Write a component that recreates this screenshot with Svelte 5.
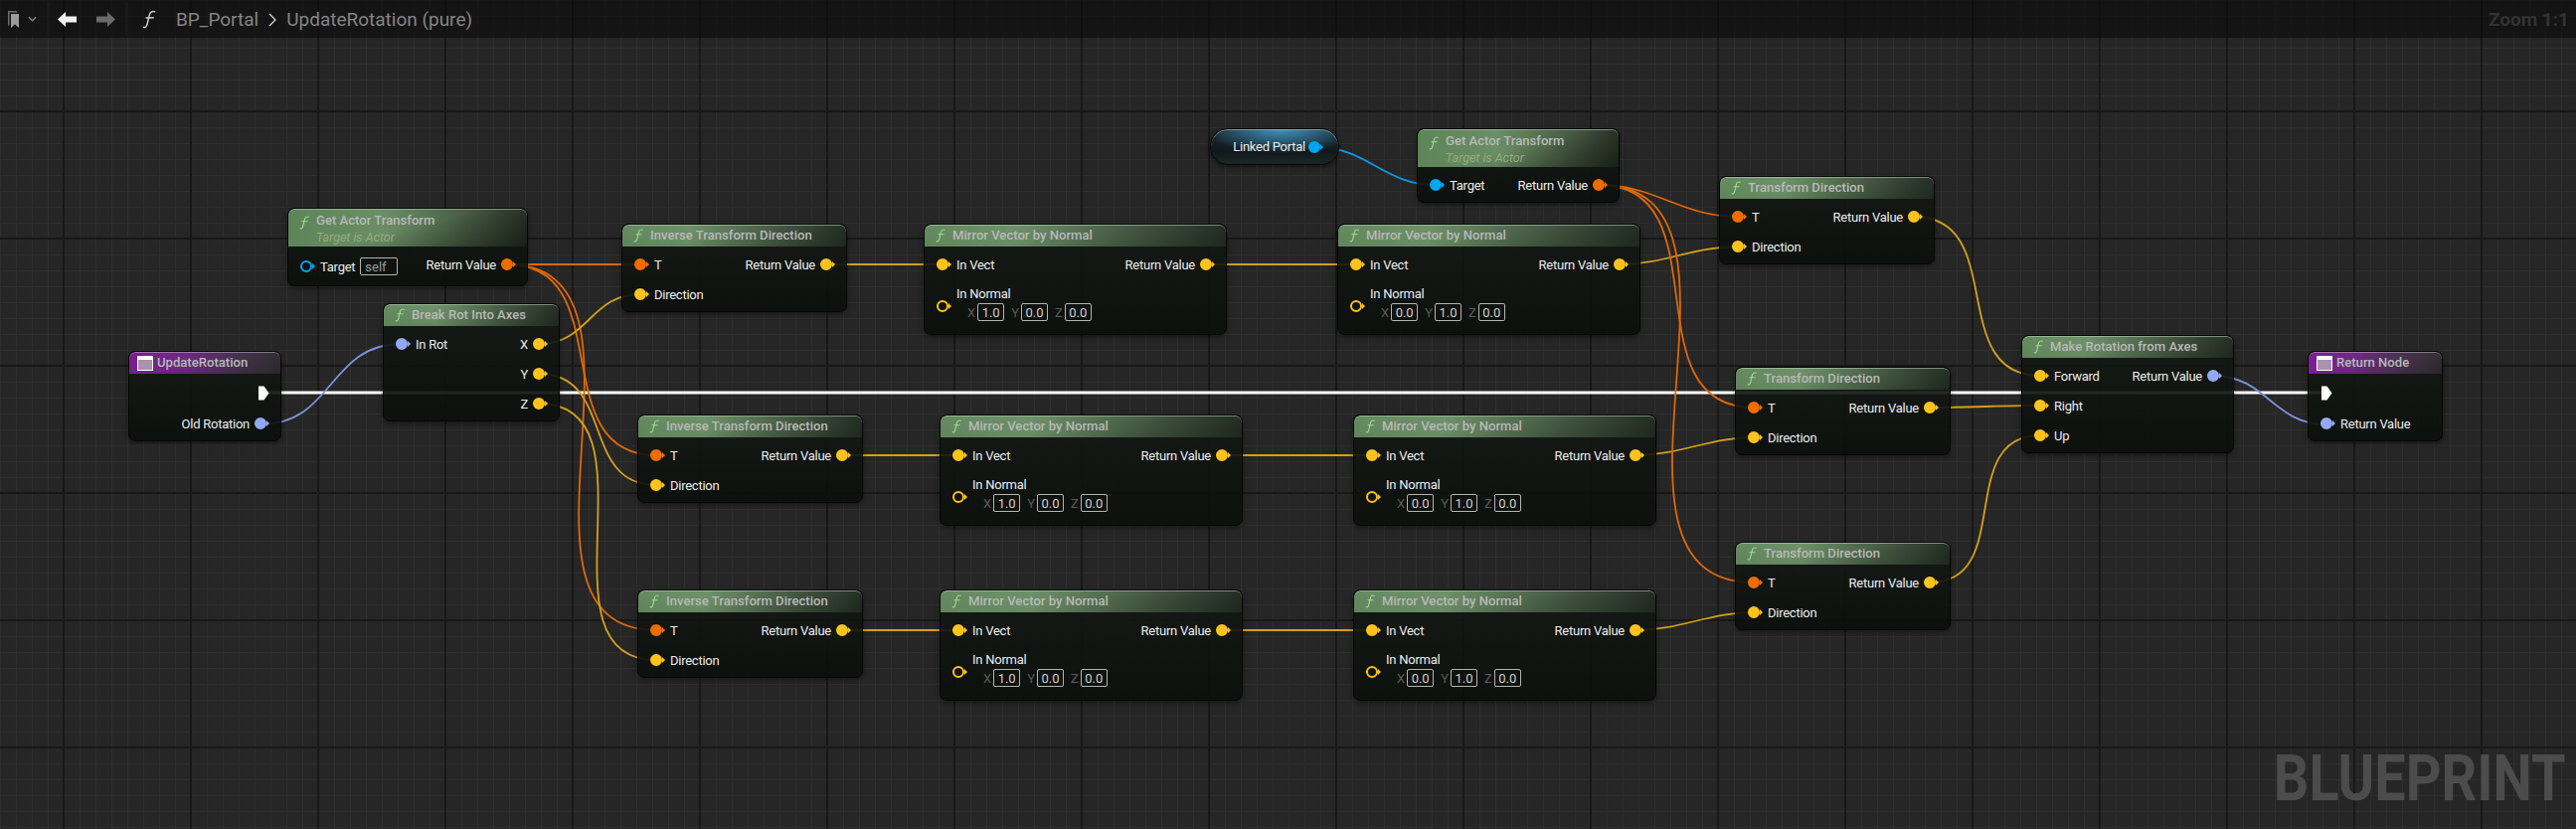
<script>
    const vec = (x, y, z) => [x, y, z];

    const inverse = (id, x, y) => ({
        id, x, y, w: 227, title: "Inverse Transform Direction",
        inputs: [{ label: "T", color: "orange" }, { label: "Direction", color: "yellow" }],
        outputs: [{ label: "Return Value", color: "yellow" }],
    });
    const mirror = (id, x, y, normal) => ({
        id, x, y, w: 305, title: "Mirror Vector by Normal",
        inputs: [{ label: "In Vect", color: "yellow" }, { label: "In Normal", color: "yellow", hollow: true, normal }],
        outputs: [{ label: "Return Value", color: "yellow" }],
    });
    const transform = (id, x, y) => ({
        id, x, y, w: 217, title: "Transform Direction",
        inputs: [{ label: "T", color: "orange" }, { label: "Direction", color: "yellow" }],
        outputs: [{ label: "Return Value", color: "yellow" }],
    });

    const nodes = [
        { id: "actorA", x: 289, y: 209, w: 242, title: "Get Actor Transform", sub: "Target is Actor",
          inputs: [{ label: "Target", color: "cyan", hollow: true, self: true }],
          outputs: [{ label: "Return Value", color: "orange" }] },
        { id: "break", x: 385, y: 305, w: 178, title: "Break Rot Into Axes",
          inputs: [{ label: "In Rot", color: "blue" }],
          outputs: [{ label: "X", color: "yellow" }, { label: "Y", color: "yellow" }, { label: "Z", color: "yellow" }] },
        { id: "entry", x: 129, y: 353, w: 154, title: "UpdateRotation", purple: true,
          inputs: [],
          outputs: [{ exec: true }, { label: "Old Rotation", color: "blue" }] },
        inverse("inv1", 625, 225),
        inverse("inv2", 641, 417),
        inverse("inv3", 641, 593),
        mirror("mir1", 929, 225, vec("1.0", "0.0", "0.0")),
        mirror("mir2", 945, 417, vec("1.0", "0.0", "0.0")),
        mirror("mir3", 945, 593, vec("1.0", "0.0", "0.0")),
        mirror("mir4", 1345, 225, vec("0.0", "1.0", "0.0")),
        mirror("mir5", 1361, 417, vec("0.0", "1.0", "0.0")),
        mirror("mir6", 1361, 593, vec("0.0", "1.0", "0.0")),
        { id: "actorB", x: 1425, y: 129, w: 204, title: "Get Actor Transform", sub: "Target is Actor",
          inputs: [{ label: "Target", color: "cyan" }],
          outputs: [{ label: "Return Value", color: "orange" }] },
        transform("tr1", 1729, 177),
        transform("tr2", 1745, 369),
        transform("tr3", 1745, 545),
        { id: "make", x: 2033, y: 337, w: 214, title: "Make Rotation from Axes",
          inputs: [{ label: "Forward", color: "yellow" }, { label: "Right", color: "yellow" }, { label: "Up", color: "yellow" }],
          outputs: [{ label: "Return Value", color: "blue" }] },
        { id: "ret", x: 2321, y: 353, w: 136, title: "Return Node", purple: true,
          inputs: [{ exec: true }, { label: "Return Value", color: "blue" }],
          outputs: [] },
    ];

    const byId = Object.fromEntries(nodes.map((n) => [n.id, n]));

    // pin centre from the node box, rows are 30 high under the header
    function pinPos(id, side, index) {
        const n = byId[id];
        const head = n.sub ? 39 : 23;
        let y = n.y + head + 18 + 30 * index;
        if (n.purple && index === 0) y += 1;
        if (n.purple && index === 1) y += 3;
        return { x: side === "out" ? n.x + n.w - 21 : n.x + 19, y };
    }

    // same tangent rule as the editor: horizontal + vertical delta, a third on each handle
    function wirePath(a, b) {
        const c = (Math.abs(b.x - a.x) + Math.abs(b.y - a.y)) / 3;
        return `M${a.x} ${a.y}C${a.x + c} ${a.y} ${b.x - c} ${b.y} ${b.x} ${b.y}`;
    }

    const links = [
        ["entry", 1, "break", 0, "blue"],
        ["actorA", 0, "inv1", 0, "orange"],
        ["actorA", 0, "inv2", 0, "orange"],
        ["actorA", 0, "inv3", 0, "orange"],
        ["break", 0, "inv1", 1, "yellow"],
        ["break", 1, "inv2", 1, "yellow"],
        ["break", 2, "inv3", 1, "yellow"],
        ["inv1", 0, "mir1", 0, "yellow"],
        ["inv2", 0, "mir2", 0, "yellow"],
        ["inv3", 0, "mir3", 0, "yellow"],
        ["mir1", 0, "mir4", 0, "yellow"],
        ["mir2", 0, "mir5", 0, "yellow"],
        ["mir3", 0, "mir6", 0, "yellow"],
        ["mir4", 0, "tr1", 1, "yellow"],
        ["mir5", 0, "tr2", 1, "yellow"],
        ["mir6", 0, "tr3", 1, "yellow"],
        ["actorB", 0, "tr1", 0, "orange"],
        ["actorB", 0, "tr2", 0, "orange"],
        ["actorB", 0, "tr3", 0, "orange"],
        ["tr1", 0, "make", 0, "yellow"],
        ["tr2", 0, "make", 1, "yellow"],
        ["tr3", 0, "make", 2, "yellow"],
        ["make", 0, "ret", 1, "blue"],
    ];

    const wires = links.map(([from, fi, to, ti, color]) => ({
        color,
        d: wirePath(pinPos(from, "out", fi), pinPos(to, "in", ti)),
    }));
    const portalWire = wirePath({ x: 1323, y: 148 }, pinPos("actorB", "in", 0));
    const execWire = "M264 395H2340";
</script>

{#snippet fnIcon(cls)}
    <svg class={cls} viewBox="0 0 12 15" fill="none" stroke="currentColor" stroke-width="1.2">
        <path d="M0.8 13.6C2.6 14.6 3.6 13.4 4.2 10.8L5.8 4C6.4 1.4 8 0.4 10.6 1.4" />
        <path d="M2.8 6.2H9.4" />
    </svg>
{/snippet}

{#snippet pin(p)}
    {#if p.exec}
        <svg class="exec" viewBox="0 0 12 15"><path d="M1 0.5H6.5L11.5 7.5L6.5 14.5H1Z" fill="#fff" /></svg>
    {:else}
        <span class="pin {p.color}" class:hollow={p.hollow}></span>
    {/if}
{/snippet}

{#snippet inputRow(p)}
    <div class="row" class:execrow={p.exec} class:tall={p.self} class:normal={p.normal}>
        {@render pin(p)}
        {#if p.normal}
            <div class="normal-col">
                <span class="label">{p.label}</span>
                <div class="vec">
                    {#each ["X", "Y", "Z"] as axis, i}
                        <span class="axis">{axis}</span>
                        <span class="val">{p.normal[i]}</span>
                    {/each}
                </div>
            </div>
        {:else if p.label}
            <span class="label">{p.label}</span>
            {#if p.self}<span class="val self">self</span>{/if}
        {/if}
    </div>
{/snippet}

<main class="graph">
    <svg class="wires" width="2591" height="834" fill="none">
        <path d={execWire} stroke="#fff" stroke-width="3" />
        {#each wires as w}
            <path d={w.d} class="wire {w.color}" />
        {/each}
        <path d={portalWire} class="wire cyan" />
    </svg>

    <div class="portal">
        <span class="label">Linked Portal</span>
        <span class="pin cyan"></span>
    </div>

    {#each nodes as n (n.id)}
        <section class="node" style="left:{n.x}px;top:{n.y}px;width:{n.w}px">
            <header class="head" class:purple={n.purple} class:tallhead={n.sub}>
                {#if n.purple}
                    <span class="fn-box"></span>
                {:else}
                    {@render fnIcon("fn")}
                {/if}
                <div class="titles">
                    <span class="title">{n.title}</span>
                    {#if n.sub}<span class="sub">{n.sub}</span>{/if}
                </div>
            </header>
            <div class="body">
                <div class="col">
                    {#each n.inputs as p}
                        {@render inputRow(p)}
                    {/each}
                </div>
                <div class="col right">
                    {#each n.outputs as p}
                        <div class="row" class:execrow={p.exec}>
                            {#if p.label}<span class="label">{p.label}</span>{/if}
                            {@render pin(p)}
                        </div>
                    {/each}
                </div>
            </div>
        </section>
    {/each}

    <nav class="topbar">
        <svg class="bookmark" viewBox="0 0 12 17">
            <path d="M0 0H9V1.5H1.5V14L0 15Z" fill="#6e6e6e" />
            <path d="M3 3H11V17L7 13.5L3 17Z" fill="#9a9a9a" />
        </svg>
        <svg class="chev" viewBox="0 0 10 6" fill="none" stroke="#8a8a8a" stroke-width="1.4"><path d="M1 1L5 5L9 1" /></svg>
        <span class="sep"></span>
        <svg class="arrow" viewBox="0 0 19 15"><path d="M0 7.5L8 0V4.5H19V10.5H8V15Z" fill="#f2f2f2" /></svg>
        <svg class="arrow fwd" viewBox="0 0 19 15"><path d="M19 7.5L11 0V4.5H0V10.5H11V15Z" fill="#6a6a6a" /></svg>
        <span class="sep"></span>
        {@render fnIcon("fn-top")}
        <span class="crumb">BP_Portal</span>
        <svg class="crumb-sep" viewBox="0 0 8 14" fill="none" stroke="#d8d8d8" stroke-width="1.3"><path d="M1 1L7 7L1 13" /></svg>
        <span class="crumb">UpdateRotation (pure)</span>
        <span class="zoom">Zoom 1:1</span>
    </nav>

    <div class="watermark">BLUEPRINT</div>
</main>

<style>
    :global(body) {
        margin: 0;
        background: #262626;
    }

    .graph {
        position: relative;
        width: 2591px;
        height: 834px;
        overflow: hidden;
        font-family: Roboto, "Liberation Sans", sans-serif;
        background-color: #262626;
        background-image:
            linear-gradient(90deg, #181818 2px, transparent 2px),
            linear-gradient(#181818 2px, transparent 2px),
            linear-gradient(90deg, #2e2e2e 1px, transparent 1px),
            linear-gradient(#2e2e2e 1px, transparent 1px);
        background-size: 128px 128px, 128px 128px, 16px 16px, 16px 16px;
        background-position: 63px 0, 0 111px, 0 0, 0 0;
    }

    .wires {
        position: absolute;
        left: 0;
        top: 0;
    }

    .wire {
        stroke-width: 1.8;
    }
    .wire.orange { stroke: #dd680a; }
    .wire.yellow { stroke: #d2a01e; }
    .wire.blue { stroke: #7d92d8; }
    .wire.cyan { stroke: #0a9ae0; }

    .node {
        position: absolute;
        box-sizing: border-box;
        border: 1px solid #050505;
        border-radius: 7px;
        background: linear-gradient(180deg, rgba(20, 24, 20, 0.9), rgba(11, 15, 11, 0.92));
        box-shadow: 0 2px 5px rgba(0, 0, 0, 0.4);
        overflow: hidden;
    }

    .head {
        box-sizing: border-box;
        height: 22px;
        display: flex;
        align-items: center;
        padding-left: 11px;
        color: #9fdc90;
        border-radius: 6px 6px 0 0;
        box-shadow: inset 0 1px 0 rgba(190, 215, 190, 0.55);
        background:
            linear-gradient(172deg, rgba(255, 255, 255, 0.05) 0%, transparent 45%, rgba(0, 0, 0, 0.22) 100%),
            linear-gradient(90deg, #5e8459 0%, #6a8e65 30%, #445842 70%, #283228 100%);
    }

    .head.tallhead {
        height: 38px;
        align-items: flex-start;
        padding-top: 4px;
        background:
            linear-gradient(165deg, transparent 50%, rgba(0, 0, 0, 0.45) 100%),
            linear-gradient(90deg, #5e8459 0%, #6a8e65 40%, #43553f 80%, #2c382b 100%);
    }

    .head.tallhead .fn {
        margin-top: 3px;
    }

    .head.purple {
        padding-left: 8px;
        box-shadow: inset 0 1px 0 rgba(210, 190, 215, 0.5);
        background:
            linear-gradient(172deg, transparent 50%, rgba(0, 0, 0, 0.18) 100%),
            linear-gradient(90deg, #7b1d92 0%, #6d2a80 35%, #473350 70%, #323033 100%);
    }

    .fn {
        width: 11px;
        height: 14px;
        margin-right: 6px;
        flex: none;
    }

    .fn-box {
        box-sizing: border-box;
        width: 16px;
        height: 15px;
        margin-right: 4px;
        flex: none;
        background: #a892ae;
        border: 1px solid #fff;
        border-top-width: 4px;
    }

    .titles {
        display: flex;
        flex-direction: column;
    }

    .title {
        font-size: 13.1px;
        font-weight: 500;
        line-height: 16px;
        color: #b8b8b8;
        white-space: nowrap;
    }

    .sub {
        font-size: 12.5px;
        font-style: italic;
        line-height: 16px;
        margin-top: 1px;
        color: #93ab82;
        white-space: nowrap;
    }

    .body {
        display: flex;
        justify-content: space-between;
        padding: 3px 14px 2px 12px;
    }

    .col {
        display: flex;
        flex-direction: column;
        min-width: 0;
    }

    .col.right {
        align-items: flex-end;
    }

    .row {
        display: flex;
        align-items: center;
        height: 30px;
        white-space: nowrap;
    }

    .row.execrow {
        height: 32px;
    }

    .row.tall {
        height: 34px;
    }

    .row.normal {
        height: 53px;
    }

    .label {
        font-size: 13px;
        letter-spacing: -0.25px;
        color: #ececec;
    }

    .right .label {
        margin-right: 5px;
    }

    .pin {
        position: relative;
        box-sizing: border-box;
        display: block;
        flex: none;
        width: 12px;
        height: 12px;
        margin-right: 8px;
        border-radius: 50%;
        background: var(--pin);
        border: 2px solid var(--pin);
    }

    .right .pin {
        margin-right: 0;
    }

    .pin::after {
        content: "";
        position: absolute;
        right: -5px;
        top: 1px;
        border-left: 3px solid var(--pin);
        border-top: 3px solid transparent;
        border-bottom: 3px solid transparent;
    }

    .pin.hollow {
        background: transparent;
    }

    .pin.orange { --pin: #f06c00; }
    .pin.yellow { --pin: #fcc31e; }
    .pin.blue { --pin: #93a9f2; }
    .pin.cyan { --pin: #00a6f0; }

    .exec {
        display: block;
        flex: none;
        width: 12px;
        height: 15px;
        margin-right: 8px;
    }

    .right .exec {
        margin-right: -3px;
    }

    .normal-col {
        align-self: flex-start;
        display: flex;
        flex-direction: column;
        padding-top: 5px;
    }

    .normal-col .label {
        line-height: 19px;
    }

    .vec {
        display: flex;
        align-items: center;
        margin-left: 11px;
    }

    .axis {
        font-size: 13px;
        color: #5a5a5a;
        margin-left: 7px;
        margin-right: 2px;
    }

    .axis:first-child {
        margin-left: 0;
    }

    .val {
        box-sizing: border-box;
        display: flex;
        align-items: center;
        justify-content: center;
        width: 27px;
        height: 18px;
        border: 1px solid #b4b4b4;
        border-radius: 2px;
        font-size: 13px;
        color: #d0d0d0;
    }

    .val.self {
        width: 38px;
        justify-content: flex-start;
        margin-left: 5px;
        padding-left: 4px;
        color: #9c9c9c;
    }

    .portal {
        position: absolute;
        left: 1217px;
        top: 129px;
        box-sizing: border-box;
        width: 130px;
        height: 37px;
        display: flex;
        align-items: center;
        justify-content: flex-end;
        padding-right: 18px;
        border: 1px solid #060606;
        border-radius: 18px;
        box-shadow: inset 0 1px 0 rgba(190, 200, 205, 0.55), 0 2px 5px rgba(0, 0, 0, 0.45);
        background:
            radial-gradient(ellipse 60% 70% at 55% 0%, rgba(70, 165, 215, 0.85), transparent),
            linear-gradient(180deg, #1c2c34, #10181c 65%, #1d2628);
    }

    .portal .label {
        margin-right: 3px;
    }

    .portal .pin {
        margin-right: 0;
    }

    .topbar {
        position: absolute;
        left: 0;
        top: 0;
        right: 0;
        height: 38px;
        display: flex;
        align-items: center;
        background: rgba(10, 10, 10, 0.62);
    }

    .bookmark {
        width: 12px;
        height: 17px;
        margin-left: 8px;
    }

    .chev {
        width: 9px;
        height: 6px;
        margin-left: 8px;
    }

    .sep {
        width: 3px;
        height: 34px;
        background: #1a1a1a;
    }

    .chev + .sep {
        margin-left: 10px;
    }

    .arrow {
        width: 19px;
        height: 15px;
        margin-left: 8px;
    }

    .arrow.fwd {
        margin-left: 20px;
    }

    .arrow.fwd + .sep {
        margin-left: 10px;
    }

    .fn-top {
        width: 15px;
        height: 21px;
        margin-left: 14px;
        color: #cfcfcf;
        margin-right: 19px;
    }

    .crumb {
        font-size: 19px;
        color: #858585;
        white-space: nowrap;
    }

    .crumb-sep {
        width: 8px;
        height: 14px;
        margin: 2px 10px 0 10px;
    }

    .zoom {
        margin-left: auto;
        margin-right: 7px;
        font-size: 19px;
        font-weight: 700;
        color: #333;
    }

    .watermark {
        position: absolute;
        right: 11px;
        bottom: 18px;
        font-size: 64px;
        line-height: 64px;
        font-weight: 700;
        color: #4c4c4c;
        transform: scaleX(0.87);
        transform-origin: right center;
    }
</style>
